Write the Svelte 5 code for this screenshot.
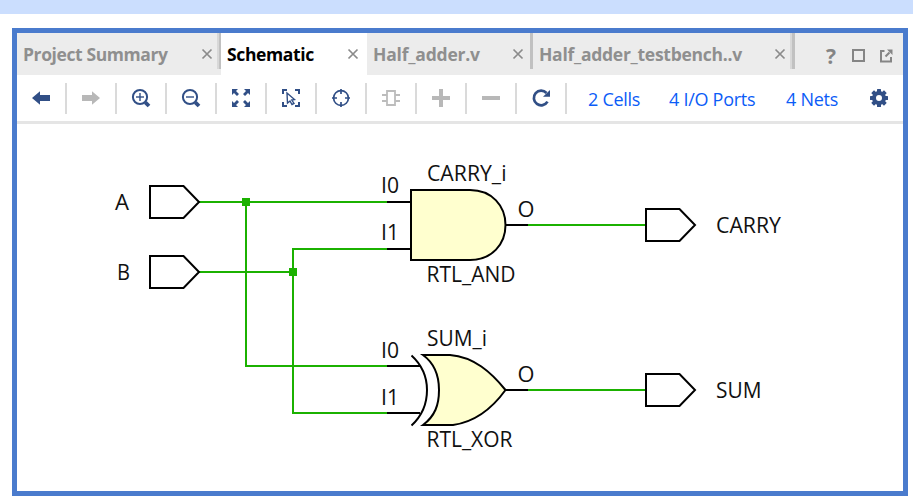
<script>
  const tabs = [
    { label: 'Project Summary', kind: 'summary' },
    { label: 'Schematic', kind: 'schematic' },
    { label: 'Half_adder.v', kind: 'source' },
    { label: 'Half_adder_testbench..v', kind: 'bench' },
  ];
  const tools = ['back', 'forward', 'zoomin', 'zoomout', 'fit', 'select', 'target', 'chip', 'plus', 'minus', 'refresh'];
  const teeth = [0, 45, 90, 135, 180, 225, 270, 315];
  const ports = [
    { x: 150, y: 202 },
    { x: 150, y: 272 },
    { x: 646, y: 225 },
    { x: 646, y: 390 },
  ];
  const labels = [
    { t: 'A', x: 115, y: 210, w: 14 },
    { t: 'B', x: 117, y: 280, w: 13 },
    { t: 'I0', x: 381, y: 193, w: 18 },
    { t: 'I1', x: 381, y: 240, w: 18 },
    { t: 'I0', x: 381, y: 358, w: 18 },
    { t: 'I1', x: 381, y: 405, w: 18 },
    { t: 'O', x: 517.5, y: 217, w: 17 },
    { t: 'O', x: 517.5, y: 382, w: 17 },
    { t: 'CARRY_i', x: 427, y: 181, w: 79.5 },
    { t: 'RTL_AND', x: 426.5, y: 282, w: 89 },
    { t: 'SUM_i', x: 427, y: 346, w: 60 },
    { t: 'RTL_XOR', x: 426.5, y: 447, w: 86 },
    { t: 'CARRY', x: 716, y: 233, w: 65 },
    { t: 'SUM', x: 716, y: 398, w: 45.5 },
  ];
</script>

<div class="page">
  <div class="band"></div>
  <main class="window">
    <header class="tabbar">
      {#each tabs as tab}
        <div class="tab {tab.kind}">
          <span class="title">{tab.label}</span>
          <svg class="close" width="12" height="12" viewBox="0 0 12 12"><path d="M1.5 1.5L10.5 10.5M10.5 1.5L1.5 10.5" /></svg>
          <i class="edge"></i>
        </div>
      {/each}
      <div class="controls">
        <span class="help">?</span>
        <svg width="13" height="13" viewBox="0 0 13 13"><rect x="1" y="1" width="11" height="11" /></svg>
        <svg width="14" height="14" viewBox="0 0 14 14">
          <path d="M5.500 2H2V12.500H12V8M6.500 7.500L10.500 3.500" /><path class="solid" d="M8 .5H13.500V6Z" />
        </svg>
      </div>
    </header>

    <nav class="toolbar">
      {#each tools as tool}
        <div class="tool">
          <svg class={tool} width="20" height="20" viewBox="0 0 20 20">
            {#if tool === 'back'}
              <path class="fill" d="M1 10L9 3.300V7H19V13H9V16.700Z" />
            {:else if tool === 'forward'}
              <path class="fill" d="M19 10L11 3.300V7H1V13H11V16.700Z" />
            {:else if tool === 'zoomin' || tool === 'zoomout'}
              <circle cx="9" cy="9" r="7.1" /><path class="thin" d="M5 9H13" />
              {#if tool === 'zoomin'}<path class="thin" d="M9 5V13" />{/if}
              <path class="handle" d="M14.300 14.300L18 18" />
            {:else if tool === 'fit'}
              <path class="fill" d="M1 1H7L5 3L8 6L6 8L3 5L1 7ZM19 1H13L15 3L12 6L14 8L17 5L19 7ZM1 19H7L5 17L8 14L6 12L3 15L1 13ZM19 19H13L15 17L12 14L14 12L17 15L19 13Z" />
            {:else if tool === 'select'}
              <path d="M2 6V2H6M14 2H18V6M2 14V18H6M14 18H18V14" />
              <path class="thin" d="M6 5L13.500 11.500L10.800 12L13 15.500L11 16.500L9 13L6.500 15Z" />
            {:else if tool === 'target'}
              <circle cx="10" cy="10" r="7.4" /><path d="M10 1V6M10 14V19M1 10H6M14 10H19" />
            {:else if tool === 'chip'}
              <path d="M6 3H14V17H6ZM1 7H6M1 13H6M14 7H19M14 13H19" />
            {:else if tool === 'plus'}
              <path d="M10 1V19M1 10H19" />
            {:else if tool === 'minus'}
              <path d="M1 10H19" />
            {:else}
              <path d="M15.500 5A7.300 7.300 0 1 0 16.500 13.600" /><path class="fill" d="M19 2V8.700H12Z" />
            {/if}
          </svg>
        </div>
      {/each}
      <div class="links">
        <span class="cells">2 Cells</span>
        <span class="io">4 I/O Ports</span>
        <span class="nets">4 Nets</span>
      </div>
      <svg class="gear" width="20" height="20" viewBox="0 0 20 20">
        {#each teeth as angle}
          <rect x="8" y="1" width="4" height="5" rx=".5" transform="rotate({angle} 10 10)" />
        {/each}
        <circle cx="10" cy="10" r="5" />
      </svg>
    </nav>

    <section class="canvas">
      <svg width="886" height="367" viewBox="17 124 886 367">
        <g class="wire">
          <path d="M199 202H388M246 202V366H388M199 272H293M388 249H293V413H388M527 225H646M527 390H646" />
          <rect x="242" y="198" width="8" height="8" /><rect x="289" y="268" width="8" height="8" />
        </g>
        <g class="part">
          <path d="M387 202H411M387 249H411M505 225H528M387 366H421M387 413H420M505 390H528" />
          {#each ports as p}
            <path d="M{p.x} {p.y - 16}h33.5l15.5 16l-15.5 16h-33.5z" />
          {/each}
          <path class="body" d="M411 190H470C492 190 505.500 206 505.500 225S492 260 470 260H411Z" />
          <path class="body" d="M423 355H450C474 357 491 372 505.500 390C491 410 475 422 453 425H423C435 416 439 405 439 390S434 363 423 355Z" />
          <path d="M411.500 355.500C423 366 427 377 427 390S423 415 411.500 425.500" />
        </g>
        {#each labels as l}
          <text x={l.x} y={l.y} textLength={l.w} lengthAdjust="spacingAndGlyphs">{l.t}</text>
        {/each}
      </svg>
    </section>
  </main>
</div>

<style>
  :global(body) { margin: 0; background: #fff; }
  .page { width: 913px; height: 503px; overflow: hidden; font-family: "Open Sans", "Noto Sans", sans-serif; }
  .band { height: 14px; background: #cbdefe; }
  .window { box-sizing: border-box; width: 896px; height: 468px; margin: 14px 0 0 12px; border: 5px solid #4a7bcd; background: #fff; }
  svg { display: block; flex: none; }
  .tabbar { display: flex; height: 42px; background: #ececec; }
  .tab { display: flex; box-sizing: border-box; align-items: center; height: 42px; padding-left: 6px; color: #8f8f8f; font-size: 17.5px; font-weight: 700; letter-spacing: -.4px; white-space: nowrap; }
  .title { flex: 1; line-height: 42px; }
  .close { stroke: #8b8b8b; stroke-width: 1.7; fill: none; margin-right: 4px; }
  .edge { align-self: flex-start; box-sizing: border-box; width: 4px; height: 36px; background: #c1c1c1; border-left: 2px solid #d8d8d8; }
  .summary { width: 204px; }
  .schematic { width: 146px; background: #fff; color: #000; letter-spacing: -.36px; }
  .schematic .edge { display: none; }
  .schematic .close { margin-right: 8px; }
  .source { width: 166px; letter-spacing: -.2px; }
  .source .edge { width: 3px; border: 0; }
  .source .close { margin-right: 6px; }
  .bench { width: 262px; letter-spacing: -.27px; }
  .bench .edge { width: 5px; }
  .controls { display: flex; flex: 1; align-items: center; padding: 3px 0 0 30px; }
  .controls svg { fill: none; stroke: #858585; stroke-width: 2; }
  .help { box-sizing: border-box; width: 27px; padding-left: 1px; color: #858585; font-size: 21px; font-weight: 700; line-height: 36px; }
  .controls svg + svg { margin-left: 14px; }
  .controls .solid { fill: #858585; stroke: none; }
  .toolbar { display: flex; align-items: center; height: 46px; border-bottom: 3px solid #e5e5e5; }
  .tool { display: flex; box-sizing: border-box; width: 50px; height: 31px; align-items: center; justify-content: center; border-right: 2px solid #dadada; }
  .tool svg { fill: none; stroke: #314f86; stroke-width: 2; }
  .tool .fill { fill: #314f86; stroke: none; }
  .tool .thin { stroke-width: 1.4; }
  .tool .handle { stroke-width: 3.8; }
  .tool .forward .fill { fill: #b8b8b8; }
  .tool .target { stroke-width: 1.7; }
  .tool .chip { stroke: #bcbcbc; stroke-width: 1.8; }
  .tool .plus, .tool .minus { stroke: #b8b8b8; stroke-width: 4; }
  .tool .refresh { stroke-width: 2.7; }
  .links { display: flex; flex: 1; padding-left: 21px; color: #0b5cf7; font-size: 18px; line-height: 24px; padding-top: 2px; letter-spacing: -.28px; white-space: nowrap; }
  .cells { width: 81px; }
  .io { width: 117px; }
  .gear { margin-right: 14px; fill: #314f86; }
  .gear circle { fill: none; stroke: #314f86; stroke-width: 4; }
  .wire path { fill: none; stroke: #1bb100; stroke-width: 2; }
  .wire rect { fill: #1bb100; }
  .part path { fill: none; stroke: #000; stroke-width: 2; }
  .part .body { fill: #ffffcf; }
  text { font-size: 21px; fill: #111; }
</style>
